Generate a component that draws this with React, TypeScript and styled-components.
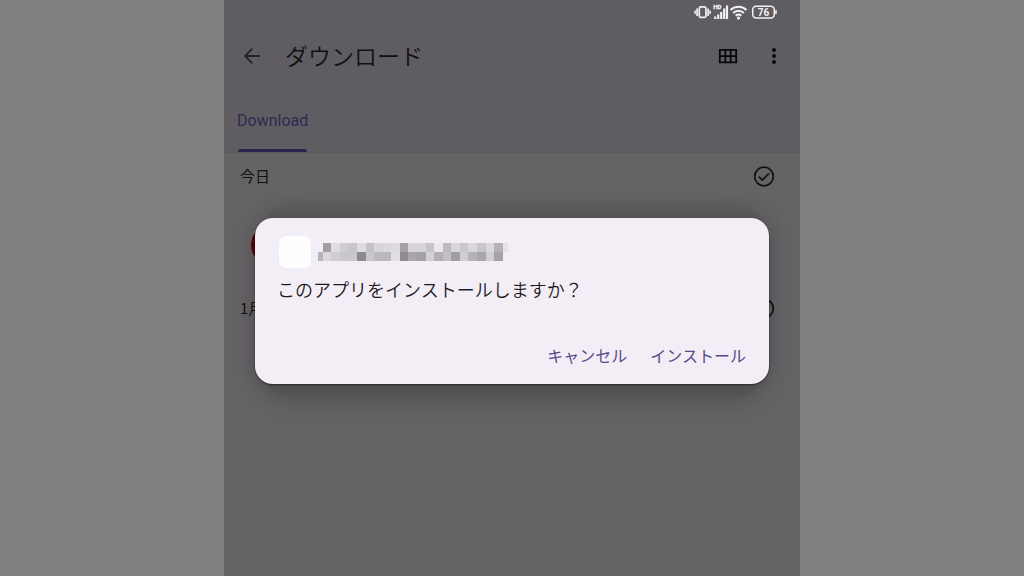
import React from "react";
import styled, { createGlobalStyle } from "styled-components";

const GlobalStyle = createGlobalStyle`
  *, *::before, *::after { box-sizing: border-box; }
  body {
    margin: 0;
    background: #808080;
    font-family: Roboto, "Noto Sans CJK JP", sans-serif;
    overflow: hidden;
  }
  button { font: inherit; border: 0; background: none; padding: 0; margin: 0; color: inherit; cursor: pointer; }
  svg { display: block; flex: none; }
  h1, h2, p { margin: 0; font-weight: 400; }
`;

const Phone = styled.main`
  position: relative;
  width: 100%;
  max-width: 576px;
  min-height: 100vh;
  margin: 0 auto;
  background: #666366;
  color: #111013;
  overflow: hidden;
`;

const Header = styled.header`
  background: #5f5d62;
  border-bottom: 1px solid #5d5c5d;
`;

const StatusBar = styled.div`
  display: flex;
  justify-content: flex-end;
  align-items: center;
  height: 24px;
  padding-right: 23px;
  color: #f2f1f3;
`;

const AppBar = styled.div`
  display: flex;
  align-items: center;
  height: 64px;
  padding: 0 14px 0 16px;
`;

const IconButton = styled.button`
  display: flex;
  align-items: center;
  justify-content: center;
  width: 24px;
  height: 24px;
`;

const Title = styled.h1`
  flex: 1;
  padding: 0 0 2px 21px;
  font-family: "Noto Sans CJK JP", sans-serif;
  font-size: 23px;
  font-weight: 350;
  line-height: 32px;
`;

const Actions = styled.div`
  display: flex;
  gap: 22px;
`;

const Tabs = styled.nav`
  display: flex;
  height: 64px;
  padding-left: 12px;
`;

const Tab = styled.a`
  display: flex;
  flex-direction: column;
  justify-content: space-between;
  padding-top: 21px;
  color: #302953;
  font-size: 16px;
  line-height: 24px;
  text-decoration: none;

  &::after {
    content: "";
    height: 3px;
    margin: 0 1px 0 2px;
    border-radius: 3px 3px 0 0;
    background: #2a2350;
  }
`;

const TabLabel = styled.span`
  padding-left: 1px;
`;

const DateRow = styled.div`
  display: flex;
  align-items: center;
  justify-content: space-between;
  height: 48px;
  padding: 0 24px 0 16px;
`;

const DateLabel = styled.h2`
  padding-bottom: 2px;
  font-family: "Noto Sans CJK JP", sans-serif;
  font-size: 15px;
  line-height: 24px;
`;

const FileRow = styled.div`
  display: flex;
  align-items: center;
  height: 84px;
  padding: 4px 27px 0;
`;

const FileIcon = styled.span`
  width: 40px;
  height: 40px;
  border-radius: 50%;
  background: #5c0507;
`;

const Overlay = styled.div`
  position: absolute;
  top: 203px;
  left: 31px;
  right: 31px;
`;

const BackSheet = styled.div`
  height: 195px;
  margin: 0 6px 0 8px;
  border-radius: 28px;
  background: linear-gradient(#605d61, #59575a 20px);
  box-shadow: 0 6px 24px rgba(0, 0, 0, 0.12);
`;

const Dialog = styled.section`
  position: absolute;
  top: 15px;
  left: 0;
  right: 0;
  display: flex;
  flex-direction: column;
  height: 166px;
  padding: 18px 23px 13px 24px;
  border-radius: 18px;
  background: #f3eef6;
  box-shadow: 0 1px 2px rgba(0, 0, 0, 0.5), 0 2px 24px rgba(0, 0, 0, 0.18);
`;

const AppRow = styled.div`
  display: flex;
  align-items: center;
  gap: 7px;
`;

const AppIcon = styled.span`
  width: 32px;
  height: 32px;
  border-radius: 7px;
  background: #fefefe;
`;

const Message = styled.p`
  flex: 1;
  margin-left: -2px;
  padding-top: 7px;
  font-family: "Noto Sans CJK JP", sans-serif;
  font-size: 18px;
  font-weight: 350;
  line-height: 28px;
  white-space: nowrap;
  color: #1c1a1f;
`;

const DialogActions = styled.div`
  display: flex;
  justify-content: flex-end;
  gap: 23px;
`;

const TextButton = styled.button`
  font-family: "Noto Sans CJK JP", sans-serif;
  font-size: 16px;
  line-height: 32px;
  color: #564a8b;
`;

const topCells = [
  "", "#a19ea4", "#dfdce2", "#cfccd2", "#c8c5cb", "#dedbe1", "#c4c1c7", "#d7d4da", "#dbd8de", "#dedbe1", "#a4a1a7", "#d6d3d9",
  "#d6d3d9", "#c6c3c9", "#ebe7ee", "#bcb9bf", "#d8d5db", "#cac7cd", "#dad7dd", "#c8c5cb", "#dad7dd", "#b4b1b7", "#e6e2e9",
];
const bottomCells = [
  "#b6b3b9", "#dad7dd", "#d0cdd3", "#c9c6cc", "#c9c6cc", "#8c898f", "#c9c6cc", "#bdbac0", "#b9b6bc", "#e0dde3", "#8e8b91", "#aaa6ac",
  "#a3a0a6", "#d3d0d6", "#b4afb6", "#c2bfc5", "#a09da3", "#d0cdd3", "#b5b2b8", "#a8a5ab", "#d0cdd3", "#a4a1a7", "",
];

const edges = [0, 14, 40, 66, 91, 117, 143, 168, 194, 220, 246, 271, 297, 323, 348, 374, 400, 425, 451, 477, 503, 528, 554, 569];

function Mosaic() {
  return (
    <svg width="190" height="18" viewBox="0 0 570 54" shapeRendering="crispEdges" aria-hidden="true">
      {[topCells, bottomCells].map((row, r) =>
        row.map((fill, i) =>
          fill ? <rect key={`${r}-${i}`} x={edges[i]} y={r * 27} width={edges[i + 1] - edges[i]} height={27} fill={fill} /> : null
        )
      )}
    </svg>
  );
}

const StatusLabel = styled.text`
  font-family: Roboto, sans-serif;
  font-weight: 700;
  fill: currentColor;
`;

function StatusIcons() {
  return (
    <svg width="84" height="20" viewBox="0 0 84 20" fill="none" stroke="currentColor" role="img" aria-label="76%">
      <rect x="6.3" y="4.8" width="6.6" height="10.6" rx="1.5" strokeWidth="1.7" />
      <path d="M4.1 6.5v7.5M15.1 6.5v7.5" strokeWidth="1.7" />
      <path d="M2.1 8.5v3.5M17.1 8.5v3.5" strokeWidth="1.5" />
      <StatusLabel x="20.3" y="7" fontSize="6" stroke="currentColor" strokeWidth="0.3">HD</StatusLabel>
      <path d="M22.2 17v-2.5M25.2 17v-4.5M28.2 17v-7M31.2 17V6.5M34 17V3.5" strokeWidth="2.2" />
      <path d="M37.5 8a11.3 11.3 0 0 1 16 0M40.2 11a7.4 7.4 0 0 1 10.6 0M42.7 13.7a4 4 0 0 1 5.6 0" strokeWidth="2" />
      <circle cx="45.5" cy="16" r="1.6" fill="currentColor" stroke="none" />
      <rect x="59.7" y="4.3" width="21.6" height="11.6" rx="3.5" strokeWidth="1.5" />
      <path d="M83 8.2v3.8" strokeWidth="1.6" />
      <StatusLabel x="70.5" y="13.7" fontSize="10" textAnchor="middle" stroke="none">76</StatusLabel>
    </svg>
  );
}

function CheckCircle() {
  return (
    <svg width="24" height="24" viewBox="0 0 24 24" fill="none" stroke="currentColor" strokeWidth="1.7">
      <circle cx="12" cy="11.5" r="9.3" />
      <path d="M6.9 11.7l3.4 3.4 6.7-6.8" />
    </svg>
  );
}

export default function App() {
  return (
    <>
      <GlobalStyle />
      <Phone>
        <Header>
          <StatusBar><StatusIcons /></StatusBar>
          <AppBar>
            <IconButton aria-label="戻る">
              <svg width="24" height="24" viewBox="0 0 24 24" fill="none" stroke="#252428" strokeWidth="1.8">
                <path d="M20 12H5M12.3 4.7L5 12l7.3 7.3" />
              </svg>
            </IconButton>
            <Title>ダウンロード</Title>
            <Actions>
              <IconButton aria-label="グリッド表示">
                <svg width="24" height="24" viewBox="0 0 24 24" fill="none" stroke="#09090a" strokeWidth="1.8">
                  <path d="M3.8 5.9h16.4v12.4H3.8zM3.8 12.1h16.4M9.3 5.9v12.4M14.7 5.9v12.4" />
                </svg>
              </IconButton>
              <IconButton aria-label="その他">
                <svg width="24" height="24" viewBox="0 0 24 24" fill="#09090a">
                  <circle cx="12" cy="6" r="2" />
                  <circle cx="12" cy="12" r="2" />
                  <circle cx="12" cy="18" r="2" />
                </svg>
              </IconButton>
            </Actions>
          </AppBar>
          <Tabs><Tab href="#download"><TabLabel>Download</TabLabel></Tab></Tabs>
        </Header>
        <DateRow>
          <DateLabel>今日</DateLabel>
          <IconButton aria-label="今日をすべて選択"><CheckCircle /></IconButton>
        </DateRow>
        <FileRow><FileIcon /></FileRow>
        <DateRow>
          <DateLabel>1月</DateLabel>
          <IconButton aria-label="1月をすべて選択"><CheckCircle /></IconButton>
        </DateRow>
        <Overlay>
          <BackSheet />
          <Dialog role="dialog" aria-label="インストールの確認">
            <AppRow><AppIcon /><Mosaic /></AppRow>
            <Message>このアプリをインストールしますか？</Message>
            <DialogActions>
              <TextButton>キャンセル</TextButton>
              <TextButton>インストール</TextButton>
            </DialogActions>
          </Dialog>
        </Overlay>
      </Phone>
    </>
  );
}
